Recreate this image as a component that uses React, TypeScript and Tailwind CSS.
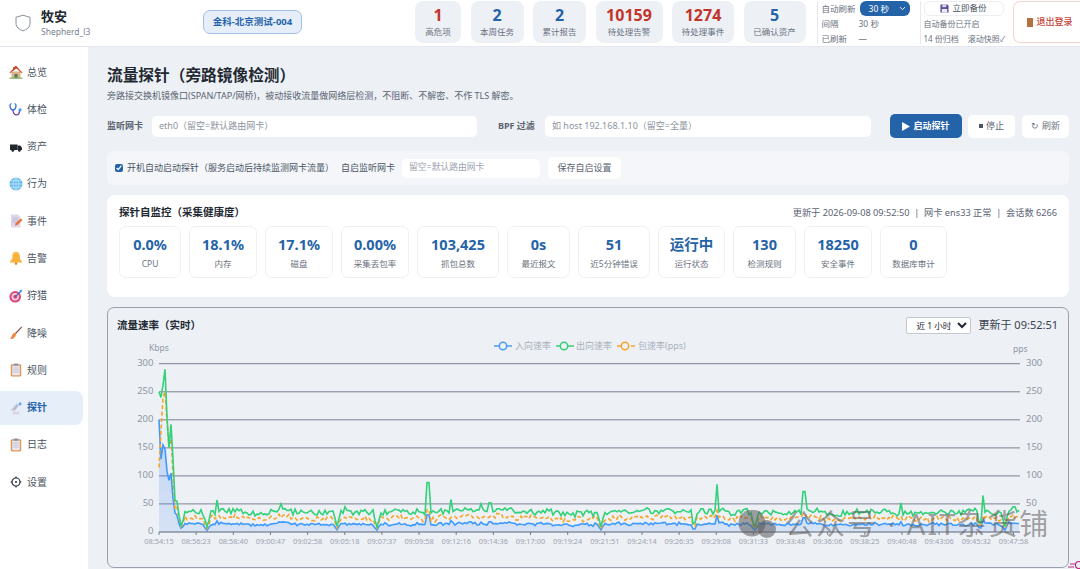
import { ChevronDown } from 'lucide-react'

function rng(seed: number) {
  let a = seed
  return () => {
    a = (a + 0x6d2b79f5) | 0
    let t = Math.imul(a ^ (a >>> 15), 1 | a)
    t = (t + Math.imul(t ^ (t >>> 7), 61 | t)) ^ t
    return ((t ^ (t >>> 14)) >>> 0) / 4294967296
  }
}

const X0 = 159
const X1 = 1020
const Y0 = 532
const PER = 168.3 / 300
const toY = (v: number) => Y0 - v * PER

const HEAD = [
  [250, 115, 200],
  [240, 180, 130],
  [262, 240, 155],
  [290, 250, 148],
  [205, 200, 108],
  [150, 150, 92],
  [192, 172, 105],
  [130, 100, 60],
  [56, 40, 34],
  [55, 44, 30],
  [30, 24, 15],
  [12, 10, 7],
  [20, 15, 10],
]
const SPIKES: [number, number][] = [
  [217, 57], [281, 50], [428, 88], [451, 58], [481, 50], [490, 52], [717, 85], [804, 72], [901, 52], [983, 65], [345, 45], [1014, 45],
]
const DIPS = [207, 377, 601, 694, 755, 980, 1005, 337]

function buildSeries() {
  const r = rng(42)
  const g: [number, number][] = []
  const o: [number, number][] = []
  const b: [number, number][] = []
  let slow = 0
  let i = 0
  for (let x = X0; x <= X1; x += 2) {
    if (i < HEAD.length) {
      g.push([x, HEAD[i][0]])
      o.push([x, HEAD[i][1]])
      b.push([x, HEAD[i][2]])
    } else {
      slow = slow * 0.7 + (r() - 0.5) * 6
      const fast = (r() - 0.5) * 9
      let k = 1
      for (const d of DIPS) {
        const dist = Math.abs(x - d)
        if (dist < 3) k = Math.min(k, 0.25 + dist * 0.2)
      }
      let gv = (36 + slow + fast) * k
      let ov = (25 + slow * 0.8 + (r() - 0.5) * 8) * k
      let bv = (14 + slow * 0.5 + (r() - 0.5) * 4.5) * k
      for (const [sx, sv] of SPIKES) {
        if (Math.abs(x - sx) < 1.5) {
          gv = sv
          ov = Math.max(ov, sv * 0.45)
          bv = Math.max(bv, sv * 0.35)
        }
      }
      g.push([x, gv])
      o.push([x, ov])
      b.push([x, bv])
    }
    i++
  }
  return { g, o, b }
}

const { g: greenPts, o: orangePts, b: bluePts } = buildSeries()
const line = (pts: [number, number][]) => pts.map(([x, v], i) => `${i ? 'L' : 'M'}${x} ${toY(v).toFixed(1)}`).join(' ')

const TICKS = [
  '08:54:15', '08:56:23', '08:58:40', '09:00:47', '09:02:58', '09:05:18', '09:07:37', '09:09:58',
  '09:12:16', '09:14:36', '09:17:00', '09:19:24', '09:21:51', '09:24:14', '09:26:35', '09:29:08',
  '09:31:33', '09:33:48', '09:36:06', '09:38:25', '09:40:48', '09:43:06', '09:45:32', '09:47:58',
]

function Chart() {
  return (
    <svg viewBox="108 338 960 229" className="block h-[229px] w-[960px]">
      <defs>
        <linearGradient id="inFill" x1="0" y1="0" x2="0" y2="1">
          <stop offset="0" stopColor="#3b82f6" stopOpacity="0.25" />
          <stop offset="1" stopColor="#3b82f6" stopOpacity="0.13" />
        </linearGradient>
      </defs>
      <g fontSize="9" fill="#a9b0bc">
        <path d="M494 346h18" stroke="#4a9df8" strokeWidth="1.5" />
        <circle cx="503" cy="346" r="3.7" fill="#edf0f5" stroke="#4a9df8" strokeWidth="1.5" />
        <text x="515" y="349">入向速率</text>
        <path d="M556 346h18" stroke="#34d17a" strokeWidth="1.5" />
        <circle cx="564" cy="346" r="3.7" fill="#edf0f5" stroke="#34d17a" strokeWidth="1.5" />
        <text x="576" y="349">出向速率</text>
        <path d="M617 346h18" stroke="#f5a52c" strokeWidth="1.5" strokeDasharray="5 2" />
        <circle cx="625" cy="346" r="3.7" fill="#edf0f5" stroke="#f5a52c" strokeWidth="1.5" />
        <text x="638" y="349">包速率(pps)</text>
      </g>
      <text x="149" y="351" fontSize="8.5" fill="#8f97a3">Kbps</text>
      <text x="1013" y="352" fontSize="8.5" fill="#8f97a3">pps</text>
      {[50, 100, 150, 200, 250, 300].map((v) => (
        <path key={v} d={`M${X0} ${toY(v).toFixed(1)}H${X1}`} stroke="#7b8291" strokeWidth="1" />
      ))}
      {[0, 50, 100, 150, 200, 250, 300].map((v) => (
        <text key={v} x="153.5" y={toY(v) + 2} fontSize="9.5" fill="#8f97a3" textAnchor="end">{v}</text>
      ))}
      {[50, 100, 150, 200, 250, 300].map((v) => (
        <text key={v} x="1026" y={toY(v) + 2} fontSize="9.5" fill="#8f97a3">{v}</text>
      ))}
      <path d={`${line(bluePts)} L${bluePts[bluePts.length - 1][0]} ${Y0} L${X0} ${Y0} Z`} fill="url(#inFill)" />
      <path d={line(bluePts)} fill="none" stroke="#3f9bfb" strokeWidth="1.6" />
      <path d={line(orangePts)} fill="none" stroke="#f5a52c" strokeWidth="1.6" strokeDasharray="4 2.5" />
      <path d={line(greenPts)} fill="none" stroke="#34d17a" strokeWidth="1.6" />
      <path d={`M${X0} ${Y0}H${X1}`} stroke="#5b6472" strokeWidth="1" />
      {TICKS.map((t, i) => {
        const x = X0 + i * 37.15
        return (
          <g key={t}>
            <path d={`M${x} ${Y0}v3`} stroke="#5b6472" strokeWidth="0.8" />
            <text x={x} y="544" fontSize="7.4" fill="#9ca3af" textAnchor="middle">{t}</text>
          </g>
        )
      })}
    </svg>
  )
}

function NavIcon({ name }: { name: string }) {
  const cls = 'h-[14px] w-[14px] shrink-0'
  switch (name) {
    case 'home':
      return (
        <svg viewBox="0 0 14 14" className={cls}>
          <rect x="2.5" y="6.5" width="9" height="6.5" fill="#d9b38a" />
          <path d="M0.5 7.5 7 1l6.5 6.5-1 .7L7 3 1.5 8.2Z" fill="#d9532f" />
          <path d="M4 2.5 7 1l3 3-3-.5-3 2.5Z" fill="#c4482a" />
          <rect x="5.5" y="9" width="3" height="4" fill="#4f7f57" />
          <rect x="0.5" y="12.6" width="13" height="1.2" fill="#7fb56a" />
        </svg>
      )
    case 'steth':
      return (
        <svg viewBox="0 0 14 14" className={cls} fill="none">
          <path d="M2.5 1.5C.8 2 .8 3.500 1.200 5c.4 1.600 1.400 3 2.800 3s2.400-1.400 2.800-3c.4-1.500.4-3-1.300-3.500" stroke="#3b6fd4" strokeWidth="1.3" />
          <path d="M4 8c0 3 1.500 4.800 3.500 4.800S10.500 11 10.500 9" stroke="#6b3fb5" strokeWidth="1.3" />
          <circle cx="11" cy="7.8" r="1.6" fill="#3f9bfb" />
        </svg>
      )
    case 'truck':
      return (
        <svg viewBox="0 0 14 14" className={cls}>
          <path d="M1 4.500h7.500v5.500H1Z" fill="#23272f" />
          <path d="M8.500 5.500h2.600L13 7.600V10H8.500Z" fill="#23272f" />
          <circle cx="3.8" cy="10.4" r="1.4" fill="#23272f" />
          <circle cx="10.4" cy="10.4" r="1.4" fill="#23272f" />
        </svg>
      )
    case 'globe':
      return (
        <svg viewBox="0 0 14 14" className={cls} fill="none">
          <circle cx="7" cy="7" r="6.4" fill="#5fb8f2" />
          <path d="M.8 7h12.400M7 .6v12.800M1.800 3.800h10.400M1.800 10.200h10.400M7 .6C3 3.500 3 10.500 7 13.400M7 .6c4 2.900 4 9.900 0 12.800" stroke="#d5effc" strokeWidth="0.7" />
        </svg>
      )
    case 'memo':
      return (
        <svg viewBox="0 0 14 14" className={cls}>
          <path d="M2 .5h7l2.500 2.500v10.500H2Z" fill="#dcd8ea" />
          <path d="M3.500 4h5M3.500 6h6M3.500 8h3" stroke="#b3aec9" strokeWidth="0.8" />
          <path d="M6 11.500l.5-2.500 5.500-4.500 1.500 1.600-5 5Z" fill="#e9713c" />
        </svg>
      )
    case 'bell':
      return (
        <svg viewBox="0 0 14 14" className={cls}>
          <path d="M7 .8c2.800 0 3.800 2.300 3.800 5 0 2.200 1 3.500 2.200 4.700v1H1v-1C2.200 9.300 3.200 8 3.200 5.800c0-2.700 1-5 3.800-5Z" fill="#f7b23b" />
          <path d="M7 .8c1.500 0 2.500.7 3.100 1.800-1-.5-2-.7-3.100-.7C5 1.900 4.500 4 4.400 6 4.200 8.500 3 10 2 11.500H1v-1C2.200 9.300 3.200 8 3.200 5.800c0-2.700 1-5 3.800-5Z" fill="#f9c76a" />
          <circle cx="7" cy="12.600" r="1.300" fill="#e58a1f" />
        </svg>
      )
    case 'target':
      return (
        <svg viewBox="0 0 14 14" className={cls} fill="none">
          <circle cx="6.2" cy="7.800" r="5.800" fill="#e0457b" />
          <circle cx="6.2" cy="7.800" r="3.700" fill="#f6d5e0" />
          <circle cx="6.2" cy="7.800" r="2" fill="#e0457b" />
          <path d="M6.200 7.800 12 2" stroke="#2b6fb0" strokeWidth="1.2" />
          <path d="M10.500 1.500 12.800.6l.4 1.700-1.600 1.300Z" fill="#3f9bfb" />
        </svg>
      )
    case 'broom':
      return (
        <svg viewBox="0 0 14 14" className={cls} fill="none">
          <path d="M12.800.8 6 8" stroke="#8a4a3a" strokeWidth="1.1" />
          <path d="M6.800 6.800c-1.500-.3-3 .4-3.600 2C2.800 10.500 2 12 1 13c2 .4 4-.5 5-2 .8-1.200 1.300-2.800.8-4.200Z" fill="#f08a4b" />
        </svg>
      )
    case 'clip':
      return (
        <svg viewBox="0 0 14 14" className={cls}>
          <rect x="1.8" y="1.2" width="10.4" height="12.3" rx="1.2" fill="#e0935b" />
          <rect x="3.2" y="2.6" width="7.6" height="9.7" fill="#e8e8f0" />
          <rect x="4.7" y="0.5" width="4.6" height="2.2" rx="0.6" fill="#8d98a8" />
          <path d="M4.300 5h5.400M4.300 7h5.400M4.300 9h5.400" stroke="#b1b5c4" strokeWidth="0.7" />
        </svg>
      )
    case 'probe':
      return (
        <svg viewBox="0 0 14 14" className={cls}>
          <path d="M1.500 9.500 8 1.800c1.800 2.800.5 6.500-2.600 8Z" fill="#cbc8da" />
          <path d="M3 13.300h8l-1.400-2.800H4.400Z" fill="#dcd4e4" />
          <path d="M5 8.300 9 4.500" stroke="#8f9ab0" strokeWidth="0.8" />
          <path d="M9.200 3.700 11 .8l2 2.300-2.600 1.800Z" fill="#6ea8ef" />
        </svg>
      )
    default:
      return (
        <svg viewBox="0 0 14 14" className={cls} fill="none">
          <circle cx="7" cy="7" r="4" stroke="#2c3038" strokeWidth="1.2" />
          <circle cx="7" cy="7" r="1" fill="#2c3038" />
          <path d="M7 1.600v1.500M7 10.900v1.500M1.600 7h1.500M10.900 7h1.500" stroke="#2c3038" strokeWidth="1.2" />
        </svg>
      )
  }
}

const NAV = [
  ['home', '总览'],
  ['steth', '体检'],
  ['truck', '资产'],
  ['globe', '行为'],
  ['memo', '事件'],
  ['bell', '告警'],
  ['target', '狩猎'],
  ['broom', '降噪'],
  ['clip', '规则'],
  ['probe', '探针'],
  ['clip', '日志'],
  ['gear', '设置'],
]

const TOP_STATS = [
  { v: '1', l: '高危项', w: 'w-[46px]', red: true },
  { v: '2', l: '本周任务', w: 'w-[53px]', red: false },
  { v: '2', l: '累计报告', w: 'w-[53px]', red: false },
  { v: '10159', l: '待处理告警', w: 'w-[67px]', red: true },
  { v: '1274', l: '待处理事件', w: 'w-[62px]', red: true },
  { v: '5', l: '已确认资产', w: 'w-[62px]', red: false },
]

const METRICS = [
  { v: '0.0%', l: 'CPU', w: 'w-[62px]' },
  { v: '18.1%', l: '内存', w: 'w-[68px]' },
  { v: '17.1%', l: '磁盘', w: 'w-[68px]' },
  { v: '0.00%', l: '采集丢包率', w: 'w-[68px]' },
  { v: '103,425', l: '抓包总数', w: 'w-[82px]' },
  { v: '0s', l: '最近报文', w: 'w-[63px]' },
  { v: '51', l: '近5分钟错误', w: 'w-[72px]' },
  { v: '运行中', l: '运行状态', w: 'w-[67px]' },
  { v: '130', l: '检测规则', w: 'w-[63px]' },
  { v: '18250', l: '安全事件', w: 'w-[68px]' },
  { v: '0', l: '数据库审计', w: 'w-[67px]' },
]

function Header() {
  return (
    <header className="flex h-[47px] shrink-0 items-start border-b border-[#e5e8ee] bg-white pt-px">
      <div className="flex w-[203px] shrink-0 items-center pl-[15px] pt-[6px]">
        <svg viewBox="0 0 16 18" className="h-[18px] w-[16px]" fill="none">
          <path d="M1 3.200C3 2.800 5.500 2 8 1.200c2.500.8 5 1.600 7 2v6c0 4-3.200 6.400-7 7.600-3.800-1.200-7-3.600-7-7.600Z" stroke="#7b8290" strokeWidth="0.9" />
        </svg>
        <div className="ml-[10px]">
          <div className="text-[13px] font-bold leading-[18px] text-[#222831]">牧安</div>
          <div className="text-[8.5px] leading-[13px] text-[#7b8290]">Shepherd_l3</div>
        </div>
      </div>
      <div className="mt-[9px] flex h-[24px] w-[99px] shrink-0 items-center justify-center rounded-[7px] border border-[#a3bfe3] bg-[#e6eefa] text-[9.5px] font-bold text-[#2563a8]">
        金科-北京测试-004
      </div>
      <div className="ml-[113px] flex shrink-0 gap-[9.5px]">
        {TOP_STATS.map((s) => (
          <div key={s.l} className={`flex h-[42px] flex-col items-center justify-center rounded-[8px] bg-[#edf0f5] ${s.w}`}>
            <div className={`text-[16px] font-bold leading-[19px] ${s.red ? 'text-[#c2352b]' : 'text-[#2563a8]'}`}>{s.v}</div>
            <div className="text-[8.5px] leading-[13px] text-[#6b7280]">{s.l}</div>
          </div>
        ))}
      </div>
      <div className="ml-[11px] flex h-[43px] w-[103px] shrink-0 flex-col border-l border-[#e5e8ee] pl-[4px] text-[8.5px] leading-[14px] text-[#6b7280]">
        <div className="flex items-center gap-[4px]">
          <span>自动刷新</span>
          <span className="flex h-[15px] w-[50px] items-center justify-between rounded-[6px] bg-[#2563a8] pl-[9px] pr-[3px] text-white">
            30 秒
            <ChevronDown className="h-[9px] w-[9px]" strokeWidth={2.5} />
          </span>
        </div>
        <div className="mt-[1px] flex">
          <span className="w-[37px]">间隔</span>
          <span>30 秒</span>
        </div>
        <div className="mt-[1px] flex">
          <span className="w-[37px]">已刷新</span>
          <span>—</span>
        </div>
      </div>
      <div className="flex h-[43px] w-[93px] shrink-0 flex-col border-l border-[#e5e8ee] pl-[3px] text-[8px] text-[#6b7280]">
        <div className="flex h-[17px] w-[80px] items-center justify-center gap-[3px] rounded-[6px] border border-[#eceef2] bg-white text-[8.5px] text-[#4b5563]">
          <svg viewBox="0 0 10 10" className="h-[9px] w-[9px]">
            <path d="M0.500.5h7.500l1.500 1.500v7.500h-9Z" fill="#5b4a94" />
            <rect x="2.5" y="0.5" width="4.5" height="3" fill="#d9d5e8" />
            <rect x="2" y="5.5" width="6" height="4" fill="#ece9f4" />
          </svg>
          立即备份
        </div>
        <div className="mt-[1px] leading-[13px]">自动备份已开启</div>
        <div className="mt-[2px] flex gap-[9px] leading-[13px]">
          <span>14 份归档</span>
          <span>滚动快照✓</span>
        </div>
      </div>
      <div className="flex h-[42px] w-[72px] shrink-0 items-center gap-[4px] rounded-l-[7px] border border-r-0 border-[#f5d5d0] bg-white pl-[13px] text-[9px] font-medium text-[#c8453a]">
        <span className="h-[9px] w-[6px] bg-[#b5713f]" />
        退出登录
      </div>
    </header>
  )
}

function Sidebar() {
  return (
    <aside className="flex w-[88px] shrink-0 flex-col gap-[3.3px] bg-white pr-[5px] pt-[8px]">
      {NAV.map(([icon, label]) => (
        <div
          key={label}
          className={`flex h-[34px] items-center gap-[4px] rounded-r-[8px] pl-[9px] text-[10px] ${label === '探针' ? 'bg-[#e6eefa] font-bold text-[#2563a8]' : 'text-[#4b5563]'}`}
        >
          <NavIcon name={icon} />
          {label}
        </div>
      ))}
    </aside>
  )
}

function Toolbar() {
  return (
    <div className="mt-[11px] flex h-[24px] items-center">
      <span className="w-[45px] shrink-0 text-[9px] font-bold text-[#5b6472]">监听网卡</span>
      <div className="flex h-[21px] w-[325px] items-center rounded-[5px] bg-white pl-[7px] text-[9px] text-[#8b93a0]">eth0（留空=默认路由网卡）</div>
      <span className="ml-[21px] w-[47px] shrink-0 text-[9px] font-bold text-[#5b6472]">BPF 过滤</span>
      <div className="flex h-[21px] w-[326px] items-center rounded-[5px] bg-white pl-[7px] text-[9px] text-[#8b93a0]">如 host 192.168.1.10（留空=全量）</div>
      <div className="ml-[19px] flex h-[24px] w-[72px] items-center justify-center gap-[3px] rounded-[5px] bg-[#2563a8] text-[9px] font-bold text-white">
        <svg viewBox="0 0 8 9" className="h-[9px] w-[8px]"><path d="M0 0l8 4.500-8 4.500Z" fill="#fff" /></svg>
        启动探针
      </div>
      <div className="ml-[6px] flex h-[23px] w-[47px] items-center justify-center gap-[3px] rounded-[5px] bg-white text-[9px] text-[#5b6472]">
        <span className="h-[4px] w-[4px] bg-[#4b5563]" />
        停止
      </div>
      <div className="ml-[7px] flex h-[23px] w-[47px] items-center justify-center gap-[3px] rounded-[5px] bg-white text-[9px] text-[#6b7280]">
        <span>↻</span>
        刷新
      </div>
    </div>
  )
}

function App() {
  return (
    <div className="relative flex h-[569px] w-[1080px] flex-col overflow-hidden bg-[#edf0f5] font-['Noto_Sans','Noto_Sans_CJK_SC',sans-serif]">
      <Header />
      <div className="flex min-h-0 flex-1">
        <Sidebar />
        <main className="min-w-0 flex-1 pl-[19px] pr-[11px] pt-[16px]">
          <h1 className="text-[15.7px] font-bold leading-[24px] text-[#222831]">流量探针（旁路镜像检测）</h1>
          <p className="mt-[2px] text-[9px] leading-[14px] text-[#5b6472]">旁路接交换机镜像口(SPAN/TAP/网桥)，被动接收流量做网络层检测，不阻断、不解密、不作 TLS 解密。</p>
          <Toolbar />

          <div className="mt-[13px] flex h-[34px] items-center rounded-[6px] bg-[#f4f6fa] pl-[8px] text-[9px] text-[#4b5563]">
            <input type="checkbox" defaultChecked readOnly className="h-[8px] w-[8px] accent-[#2563a8]" />
            <span className="ml-[4px] w-[214px]">开机自动启动探针（服务启动后持续监测网卡流量）</span>
            <span className="w-[61px]">自启监听网卡</span>
            <div className="flex h-[19px] w-[138px] items-center rounded-[5px] bg-white pl-[7px] text-[8.8px] text-[#9ca3af]">留空=默认路由网卡</div>
            <div className="ml-[8px] flex h-[22px] w-[73px] items-center justify-center rounded-[5px] bg-white text-[9px] text-[#5b6472]">保存自启设置</div>
          </div>

          <section className="mt-[10px] h-[102px] rounded-[8px] bg-white px-[12px] pt-[11px]">
            <div className="flex h-[14px] items-center justify-between">
              <h2 className="text-[10.5px] font-bold text-[#222831]">探针自监控（采集健康度）</h2>
              <span className="whitespace-pre text-[9.2px] text-[#5b6472]">更新于 2026-09-08 09:52:50  |  网卡 ens33 正常  |  会话数 6266</span>
            </div>
            <div className="mt-[6px] flex gap-[8px]">
              {METRICS.map((m) => (
                <div key={m.l} className={`flex h-[52px] flex-col items-center justify-center rounded-[7px] border border-[#eef0f4] ${m.w}`}>
                  <div className="text-[14.5px] font-bold leading-[20px] text-[#2563a8]">{m.v}</div>
                  <div className="mt-[3px] text-[8.5px] leading-[13px] text-[#6b7280]">{m.l}</div>
                </div>
              ))}
            </div>
          </section>

          <section className="mt-[10px] h-[261px] rounded-[7px] border border-[#9aa1ad] bg-[#edf0f5]">
            <div className="flex h-[30px] items-center justify-between pl-[9px] pr-[10px] pt-[5px]">
              <h2 className="text-[10.5px] font-bold text-[#222831]">流量速率（实时）</h2>
              <div className="flex items-center gap-[7px]">
                <select defaultValue="1h" className="h-[17px] w-[65px] rounded-[2px] border border-[#c4c8cf] bg-white pl-[5px] text-[8.5px] text-[#222831]">
                  <option value="1h">近 1 小时</option>
                </select>
                <span className="text-[11px] text-[#374151]">更新于 09:52:51</span>
              </div>
            </div>
            <Chart />
          </section>
        </main>
      </div>

      {/* watermark over the screenshot */}
      <div className="pointer-events-none absolute left-[737px] top-[504px] flex items-center gap-[8px] text-[29px] leading-[40px] tracking-[2px] text-[#5a5a5a]/55">
        <svg viewBox="0 0 40 28" className="h-[28px] w-[40px]">
          <circle cx="15" cy="13" r="13.500" fill="#5a5a5a" fillOpacity="0.55" />
          <circle cx="30" cy="19" r="9" fill="#5a5a5a" fillOpacity="0.55" />
        </svg>
        <span className="whitespace-nowrap">公众号 · AIT杂货铺</span>
      </div>
      <svg viewBox="0 0 12 10" className="absolute bottom-0 right-0 h-[10px] w-[12px]" fill="none">
        <path d="M0 8h6M2 5h5" stroke="#c2267c" strokeWidth="1" />
        <circle cx="11" cy="6" r="3.500" stroke="#c2267c" strokeWidth="1.2" />
      </svg>
    </div>
  )
}

export default App
